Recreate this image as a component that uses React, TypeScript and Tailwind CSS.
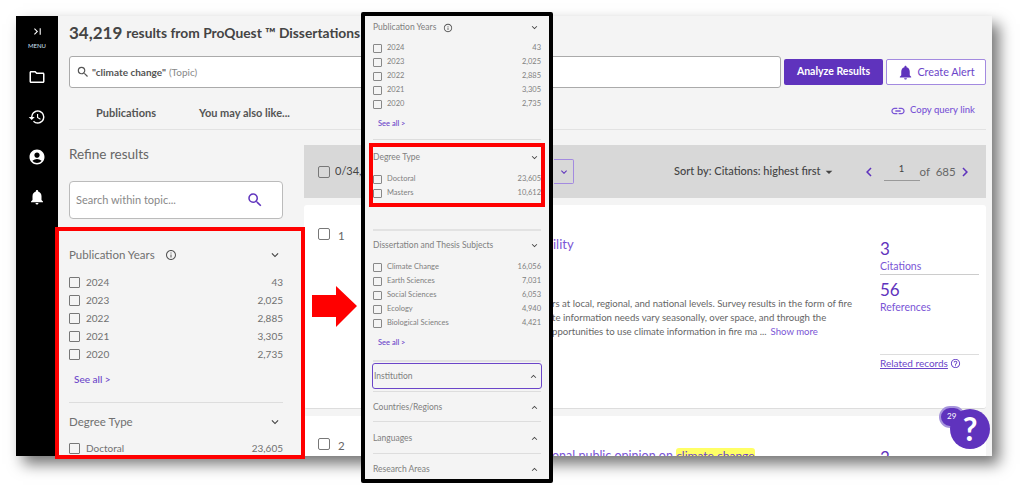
import { MdOutlineFolder, MdHistory, MdAccountCircle, MdNotifications, MdSearch, MdInsertLink, MdKeyboardArrowDown, MdKeyboardArrowUp, MdChevronLeft, MdChevronRight, MdArrowDropDown, MdLastPage, MdInfoOutline, MdHelpOutline } from "react-icons/md";

const years = [["2024", "43"], ["2023", "2,025"], ["2022", "2,885"], ["2021", "3,305"], ["2020", "2,735"]];
const degrees = [["Doctoral", "23,605"], ["Masters", "10,612"]];
const subjects = [["Climate Change", "16,056"], ["Earth Sciences", "7,031"], ["Social Sciences", "6,053"], ["Ecology", "4,940"], ["Biological Sciences", "4,421"]];

const FacetRow = ({ label, count }: { label: string; count: string }) => (
    <div className="flex items-center h-[18px] text-[10px] text-[#707070]">
        <span className="w-[11px] h-[11px] border border-[#777] rounded-[1px] bg-[#f4f4f4] mr-[6px]" />
        <span className="flex-1">{label}</span>
        <span>{count}</span>
    </div>
);

const MiniRow = ({ label, count }: { label: string; count: string }) => (
    <div className="flex items-center h-[14px] text-[7.5px] text-[#808080]">
        <span className="w-[9px] h-[9px] border border-[#888] rounded-[1px] mr-[5px]" />
        <span className="flex-1">{label}</span>
        <span>{count}</span>
    </div>
);

const MiniHeader = ({ title, open, info }: { title: string; open?: boolean; info?: boolean }) => (
    <div className="flex items-center text-[8.5px] text-[#808080] h-[15px]">
        <span>{title}</span>
        {info && <MdInfoOutline className="ml-[7px] text-[10px] text-[#555]" />}
        <span className="flex-1" />
        {open ? <MdKeyboardArrowDown className="text-[11px] text-[#444] mr-[1px]" /> : <MdKeyboardArrowUp className="text-[11px] text-[#444] mr-[1px]" />}
    </div>
);

const App = () => {
    return (
        <div className="relative w-[1024px] h-[488px] bg-white overflow-hidden font-['Lato','Noto_Sans',sans-serif]">
            <div className="relative ml-4 mt-4 w-[976px] h-[440px] flex bg-[#f4f4f4] overflow-hidden shadow-[7px_8px_14px_rgba(0,0,0,0.55)]">
                {/* Side menu */}
                <div className="w-[42px] shrink-0 bg-black flex flex-col items-center text-white pt-[9px]">
                    <MdLastPage className="text-[13px]" />
                    <span className="text-[6px] mt-[4px] leading-[8px] text-[#cfe0f5]">MENU</span>
                    <MdOutlineFolder className="text-[18px] mt-[18px]" />
                    <MdHistory className="text-[18px] mt-[22px]" />
                    <MdAccountCircle className="text-[18px] mt-[22px]" />
                    <MdNotifications className="text-[18px] mt-[22px]" />
                </div>

                <div className="flex-1 pl-[11px] pr-[6px]">
                    <h1 className="h-[40px] pb-[6px] flex items-center gap-[4px] text-[#444] font-bold text-[13.8px] whitespace-nowrap">
                        <span className="text-[17px]">34,219</span> results from ProQuest ™ Dissertations
                    </h1>

                    <div className="flex items-center">
                        <div className="w-[712px] h-[32px] bg-white border border-[#aaa] rounded-[3px] flex items-center pl-[6px] text-[10px] text-[#555]">
                            <MdSearch className="text-[14px] mr-[2px]" />
                            <b>"climate change"</b>
                            <span className="ml-[3px] text-[#888]">(Topic)</span>
                        </div>
                        <button className="ml-[3px] w-[99px] h-[26px] bg-[#5f33bd] text-white rounded-[2px] text-[10.5px] font-bold">Analyze Results</button>
                        <button className="ml-[3px] w-[100px] h-[26px] bg-white border border-[#a38ae0] text-[#6b45c9] rounded-[2px] text-[10.8px] flex items-center justify-center gap-[3px]">
                            <MdNotifications className="text-[17px] text-[#5f33bd]" />
                            Create Alert
                        </button>
                    </div>

                    <div className="h-[42px] pt-[10px] border-b border-[#e2e2e2] flex items-center text-[11px] font-bold text-[#555]">
                        <span className="ml-[27px]">Publications</span>
                        <span className="ml-[43px]">You may also like...</span>
                        <span className="flex-1" />
                        <span className="flex items-center gap-[4px] mb-[6px] text-[#7a55d6] text-[9.5px] font-medium mr-[11px]">
                            <MdInsertLink className="text-[16px]" />
                            Copy query link
                        </span>
                    </div>

                    <div className="flex mt-[14px] gap-[21px]">
                        {/* Filters */}
                        <div className="w-[214px] shrink-0">
                            <div className="text-[13.5px] leading-[20px] text-[#666]">Refine results</div>
                            <div className="mt-[17px] h-[38px] bg-white border border-[#bbb] rounded-[4px] flex items-center justify-between pl-[6px] pr-[18px] text-[11px] text-[#888]">
                                Search within topic...
                                <MdSearch className="text-[18px] text-[#5f33bd]" />
                            </div>
                            <div className="mt-[26px] flex items-center h-[20px] text-[11.5px] text-[#707070]">
                                Publication Years
                                <MdInfoOutline className="ml-[10px] text-[12px] text-[#555]" />
                                <span className="flex-1" />
                                <MdKeyboardArrowDown className="text-[14px] text-[#444] mr-[1px]" />
                            </div>
                            <div className="mt-[8px]">
                                {years.map(([label, count]) => (
                                    <FacetRow key={label} label={label} count={count} />
                                ))}
                            </div>
                            <div className="mt-[9px] ml-[5px] text-[10px] text-[#6b45c9] font-medium">See all &gt;</div>
                            <div className="mt-[15px] border-t border-[#ddd]" />
                            <div className="mt-[9px] flex items-center h-[20px] text-[11.5px] text-[#707070]">
                                Degree Type
                                <span className="flex-1" />
                                <MdKeyboardArrowDown className="text-[14px] text-[#444] mr-[1px]" />
                            </div>
                            <div className="mt-[7px]">
                                <FacetRow label="Doctoral" count="23,605" />
                            </div>
                        </div>

                        {/* Results */}
                        <div className="w-[682px] shrink-0 pt-[1px]">
                            <div className="h-[53px] bg-[#d8d8d8] flex items-center pl-[14px] text-[11px] text-[#444]">
                                <span className="w-[12px] h-[12px] border border-[#777] rounded-[2px] mr-[5px]" />
                                <span className="w-[60px] whitespace-nowrap overflow-hidden">0/34,219</span>
                                <span className="ml-[155px] w-[4px] h-[25px]" />
                                <span className="w-[20px] h-[25px] border border-[#a38ae0] border-l-0 rounded-r-[2px] flex items-center justify-center text-[#5f33bd]">
                                    <MdKeyboardArrowDown className="text-[12px]" />
                                </span>
                                <span className="ml-[100px] text-[11px] text-[#444] font-medium flex items-center whitespace-nowrap">
                                    Sort by: Citations: highest first
                                    <MdArrowDropDown className="text-[16px]" />
                                </span>
                                <MdChevronLeft className="ml-[23px] text-[18px] text-[#5f33bd]" />
                                <span className="ml-[6px] w-[36px] border-b border-[#999] text-center text-[9.5px] pb-[3px]">1</span>
                                <span className="text-[11.5px] text-[#666] whitespace-nowrap">of&nbsp; 685</span>
                                <MdChevronRight className="text-[18px] text-[#5f33bd]" />
                            </div>

                            <div className="mt-[7px] h-[204px] bg-white rounded-[3px] border-b border-[#ddd] flex">
                                <div className="w-[248px] pl-[14px] pt-[22px] flex items-start text-[11.5px] text-[#666]">
                                    <span className="w-[12px] h-[12px] mt-[1px] border border-[#777] rounded-[2px] mr-[8px]" />
                                    1
                                </div>
                                <div className="w-[328px] text-[9.6px] text-[#666] whitespace-nowrap">
                                    <div className="mt-[31px] pl-[1px] text-[13px] leading-[16px] text-[#7a55d6]">ility</div>
                                    <div className="mt-[45px] leading-[14px]">
                                        <div>rs at local, regional, and national levels. Survey results in the form of fire</div>
                                        <div>te information needs vary seasonally, over space, and through the</div>
                                        <div>
                                            pportunities to use climate information in fire ma ...
                                            <span className="ml-[4px] text-[#7a55d6]">Show more</span>
                                        </div>
                                    </div>
                                </div>
                                <div className="w-[99px] pt-[34px]">
                                    <div className="text-[17px] leading-[20px] text-[#5f33bd]">3</div>
                                    <div className="text-[10.5px] leading-[14px] text-[#7a55d6] pb-[1px] border-b border-[#ccc]">Citations</div>
                                    <div className="text-[17px] leading-[20px] text-[#5f33bd] mt-[5px]">56</div>
                                    <div className="text-[10.5px] leading-[14px] text-[#7a55d6]">References</div>
                                    <div className="mt-[40px] pt-[1px] border-t border-[#ddd] flex items-center text-[10px] text-[#6b45c9] underline whitespace-nowrap">
                                        Related records
                                        <MdHelpOutline className="ml-[2px] text-[11px]" />
                                    </div>
                                </div>
                            </div>

                            <div className="mt-[7px] h-[60px] bg-white flex">
                                <div className="w-[248px] pl-[14px] pt-[21px] flex items-start text-[11.5px] text-[#666]">
                                    <span className="w-[12px] h-[12px] mt-[1px] border border-[#777] rounded-[2px] mr-[8px]" />
                                    2
                                </div>
                                <div className="w-[328px] mt-[32px] text-[12.5px] leading-[16px] text-[#7a55d6] whitespace-nowrap">
                                    onal public opinion on <span className="bg-[#ffff66] rounded-[3px] text-[#6b45c9] text-[12px]">climate change</span>
                                </div>
                                <div className="mt-[32px] text-[17px] leading-[20px] text-[#5f33bd]">3</div>
                            </div>
                        </div>
                    </div>
                </div>

                {/* Help button */}
                <div className="absolute left-[923px] top-[390px] w-[26px] h-[22px] rounded-full bg-[#5f33bd] border-2 border-[#a694dc]" />
                <div className="absolute left-[934px] top-[393px] w-[40px] h-[40px] rounded-full bg-[#5f33bd] text-white text-[32px] font-bold flex items-center justify-center">?</div>
                <span className="absolute left-[931px] top-[395px] text-white text-[8px] leading-[10px]">29</span>
            </div>

            {/* Callout on the original filters */}
            <div className="absolute left-[55px] top-[227px] w-[250px] h-[232px] border-[4px] border-[#ff0000]" />
            <svg className="absolute left-[312px] top-[286px]" width="45" height="41" viewBox="0 0 45 41">
                <polygon points="0,9 24,9 24,0 45,20 24,41 24,31 0,31" fill="#ff0000" />
            </svg>

            {/* Expanded filter panel */}
            <div className="absolute left-[361px] top-[12px] w-[192px] h-[471px] bg-[#f4f4f4] border-[4px] border-black rounded-[2px] px-[8px] pt-[4px]">
                <MiniHeader title="Publication Years" open info />
                <div className="mt-[6px]">
                    {years.map(([label, count]) => (
                        <MiniRow key={label} label={label} count={count} />
                    ))}
                </div>
                <div className="mt-[7px] ml-[5px] h-[14px] text-[7.5px] text-[#6b45c9] font-medium">See all &gt;</div>
                <div className="mt-[7px] border-t border-[#ddd]" />
                <div className="mt-[10px]"><MiniHeader title="Degree Type" open /></div>
                <div className="mt-[7px]">
                    {degrees.map(([label, count]) => (
                        <MiniRow key={label} label={label} count={count} />
                    ))}
                </div>
                <div className="mt-[29px] border-t-2 border-[#e2e2e2]" />
                <div className="mt-[7px]"><MiniHeader title="Dissertation and Thesis Subjects" open /></div>
                <div className="mt-[7px]">
                    {subjects.map(([label, count]) => (
                        <MiniRow key={label} label={label} count={count} />
                    ))}
                </div>
                <div className="mt-[7px] ml-[5px] h-[14px] text-[7.5px] text-[#6b45c9] font-medium">See all &gt;</div>
                <div className="mt-[9px] border-t-2 border-[#e2e2e2]" />
                <div className="-mx-[1px] mt-[1px] h-[26px] border border-[#6b45c9] rounded-[3px] px-[1px] flex flex-col justify-center"><MiniHeader title="Institution" /></div>
                <div className="mt-[2px] border-t border-[#ddd]" />
                <div className="mt-[8px]"><MiniHeader title="Countries/Regions" /></div>
                <div className="mt-[6px] border-t border-[#ddd]" />
                <div className="mt-[9px]"><MiniHeader title="Languages" /></div>
                <div className="mt-[7px] border-t border-[#ddd]" />
                <div className="mt-[8px]"><MiniHeader title="Research Areas" /></div>
                <div className="absolute left-[4px] top-[127px] w-[176px] h-[64px] border-[4px] border-[#ff0000]" />
            </div>
        </div>
    );
};

export default App;
